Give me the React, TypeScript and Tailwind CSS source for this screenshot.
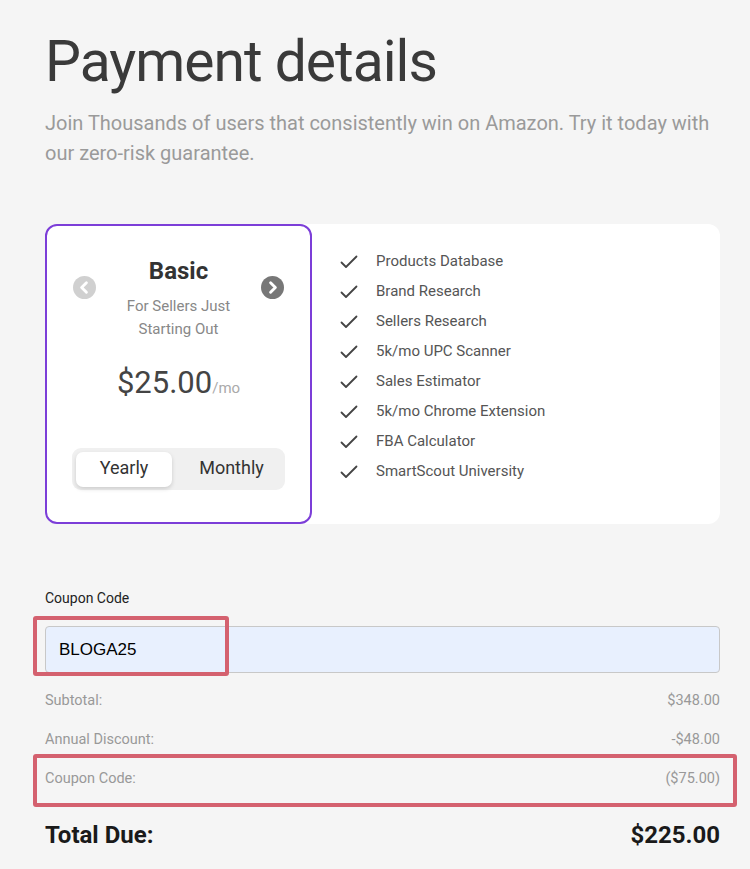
import React from 'react';

const features = [
  'Products Database',
  'Brand Research',
  'Sellers Research',
  '5k/mo UPC Scanner',
  'Sales Estimator',
  '5k/mo Chrome Extension',
  'FBA Calculator',
  'SmartScout University',
];

const Check = () => (
  <svg width="18" height="14" viewBox="0 0 18 14" fill="none" className="shrink-0">
    <path d="M1.5 7.5L6 12L16.5 1.5" stroke="#444" strokeWidth="1.8" strokeLinecap="round" strokeLinejoin="round" />
  </svg>
);

const Arrow = ({ dir, color }: { dir: 'left' | 'right'; color: string }) => (
  <svg width="23" height="23" viewBox="0 0 24 24">
    <circle cx="12" cy="12" r="12" fill={color} />
    {dir === 'left' ? (
      <path d="M14 7L9 12L14 17" stroke="#fff" strokeWidth="3" fill="none" strokeLinecap="round" strokeLinejoin="round" />
    ) : (
      <path d="M10 7L15 12L10 17" stroke="#fff" strokeWidth="3" fill="none" strokeLinecap="round" strokeLinejoin="round" />
    )}
  </svg>
);

const App: React.FC = () => {
  return (
    <div className="min-h-[869px] w-[750px] bg-[#f5f5f5] pl-[45px] pr-[30px] pt-[24px] font-['Roboto',sans-serif]">
      <h1 className="text-[57px] font-normal leading-[76px] text-[#3a3a3a] tracking-[-1px]">Payment details</h1>
      <p className="mt-[8px] text-[20px] font-normal leading-[30px] text-[#9a9a9a]">
        Join Thousands of users that consistently win on Amazon. Try it today with our zero-risk guarantee.
      </p>

      <div className="mt-[56px] flex h-[300px] rounded-[12px] bg-white">
        <div className="flex w-[267px] shrink-0 flex-col items-center rounded-[12px] border-2 border-[#7c3ed8] pt-[29px]">
          <div className="flex w-full items-start justify-between px-[26px]">
            <div className="mt-[21px]">
              <Arrow dir="left" color="#d0d0d0" />
            </div>
            <div className="flex flex-col items-center">
              <div className="text-[24px] font-bold leading-[32px] text-[#333]">Basic</div>
              <div className="mt-[8px] text-center text-[15px] leading-[23px] text-[#888]">
                For Sellers Just
                <br />
                Starting Out
              </div>
            </div>
            <div className="mt-[21px]">
              <Arrow dir="right" color="#777" />
            </div>
          </div>
          <div className="mt-[22px] flex items-baseline text-[#444]">
            <span className="text-[31px] leading-[40px]">$25.00</span>
            <span className="text-[15px] text-[#aaa]">/mo</span>
          </div>
          <div className="mt-[45px] flex h-[42px] w-[213px] items-center rounded-[9px] bg-[#f0f0f0] p-[4px]">
            <div className="flex h-[35px] w-[96px] items-center justify-center rounded-[7px] bg-white pb-[3px] text-[18px] text-[#333] shadow-[0_2px_4px_rgba(0,0,0,0.15)]">
              Yearly
            </div>
            <div className="flex flex-1 items-center justify-center pb-[3px] pl-[10px] text-[18px] text-[#333]">Monthly</div>
          </div>
        </div>
        <ul className="flex flex-col gap-[9px] pl-[28px] pt-[27px]">
          {features.map((f) => (
            <li key={f} className="flex h-[21px] items-center gap-[18px] text-[15px] text-[#555]">
              <Check />
              <span>{f}</span>
            </li>
          ))}
        </ul>
      </div>

      <div className="mt-[64px] text-[14px] leading-[20px] text-[#222]">Coupon Code</div>
      <div className="relative mt-[18px]">
        <div className="flex h-[47px] items-center rounded-[4px] border border-[#c8c8c8] bg-[#e8f0fe] pl-[13px] font-['Liberation_Sans',sans-serif] text-[17px] text-black">
          BLOGA25
        </div>
        <div className="absolute left-[-12px] top-[-10px] h-[60px] w-[196px] rounded-[3px] border-[4px] border-[#d4616f]" />
      </div>

      <div className="mt-[18px] flex flex-col text-[14.5px] text-[#999]">
        <div className="flex h-[20px] items-center justify-between">
          <span>Subtotal:</span>
          <span>$348.00</span>
        </div>
        <div className="mt-[19px] flex h-[20px] items-center justify-between">
          <span>Annual Discount:</span>
          <span>-$48.00</span>
        </div>
        <div className="relative mt-[19px] flex h-[20px] items-center justify-between">
          <span>Coupon Code:</span>
          <span>($75.00)</span>
          <div className="absolute left-[-12px] right-[-17px] top-[-15px] h-[53px] rounded-[3px] border-[4px] border-[#d4616f]" />
        </div>
      </div>

      <div className="mt-[31px] flex items-center justify-between text-[24px] font-bold leading-[30px] text-[#1a1a1a]">
        <span>Total Due:</span>
        <span>$225.00</span>
      </div>
    </div>
  );
};

export default App;
